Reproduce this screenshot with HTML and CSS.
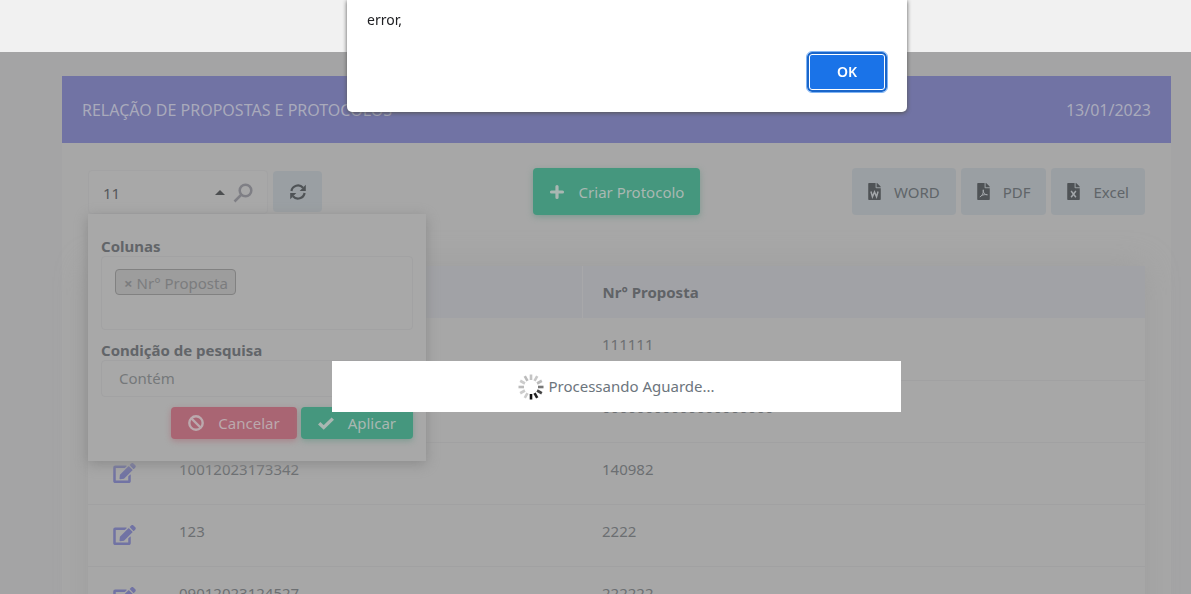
FILE: index.html
```html
<!DOCTYPE html>
<html lang="pt-BR">
<head>
<meta charset="utf-8">
<title>Relação de Propostas e Protocolos</title>
<link rel="stylesheet" href="styles.css">
</head>
<body>
<svg class="sprite" aria-hidden="true">
  <symbol id="edit" viewBox="0 0 576 512"><path d="M402.600 83.200l90.200 90.200c3.800 3.800 3.800 10 0 13.800L274.400 405.600l-92.800 10.300c-12.400 1.400-22.900-9.100-21.500-21.500l10.300-92.800L388.800 83.200c3.800-3.800 10-3.800 13.800 0zm162-22.900l-48.800-48.800c-15.200-15.200-39.900-15.200-55.200 0l-35.400 35.400c-3.800 3.800-3.800 10 0 13.800l90.200 90.200c3.800 3.800 10 3.800 13.800 0l35.400-35.400c15.200-15.300 15.200-40 0-55.200zM384 346.200V448H64V128h229.800c3.200 0 6.200-1.300 8.500-3.500l40-40c7.600-7.600 2.200-20.500-8.500-20.500H48C21.500 64 0 85.500 0 112v352c0 26.500 21.500 48 48 48h352c26.500 0 48-21.500 48-48V306.200c0-10.700-12.900-16-20.500-8.500l-40 40c-2.200 2.300-3.500 5.300-3.500 8.500z"/></symbol>
  <symbol id="file" viewBox="0 0 384 512"><path d="M224 136V0H24C10.700 0 0 10.700 0 24v464c0 13.300 10.700 24 24 24h336c13.300 0 24-10.700 24-24V160H248c-13.200 0-24-10.800-24-24zM256 0v128h128v-6c0-6-3-12-7-17L279 7c-4-4-10-7-17-7z"/></symbol>
</svg>

<div class="topbar"></div>

<main class="card">
  <header class="card-head">
    <span>RELAÇÃO DE PROPOSTAS E PROTOCOLOS</span>
    <span>13/01/2023</span>
  </header>

  <div class="card-body">
    <div class="toolbar">
      <div class="tools">
        <div class="search">
          <input class="search-input" type="text" value="11" aria-label="Pesquisar">
          <button class="bare" type="button" aria-label="Opções de pesquisa"><svg class="caret" viewBox="0 0 10 5"><path d="M0 5L5 0l5 5z"/></svg></button>
          <button class="bare" type="button" aria-label="Buscar"><svg class="lens" viewBox="0 0 20 20"><circle cx="12.500" cy="7.500" r="5.800"/><path d="M8.500 11.500L1.500 18.500"/></svg></button>
          <form class="filter">
            <label class="filter-label" for="colunas">Colunas</label>
            <div class="tags" id="colunas"><span class="tag"><button class="bare tag-x" type="button" aria-label="Remover">×</button>Nr° Proposta</span></div>
            <label class="filter-label" for="condicao">Condição de pesquisa</label>
            <select class="condition" id="condicao"><option>Contém</option></select>
            <div class="filter-actions">
              <button class="btn red" type="button"><svg class="icon" viewBox="0 0 16 16"><circle cx="8" cy="8" r="6.700" fill="none" stroke="currentColor" stroke-width="2.400"/><path d="M3.500 3.500l9 9" stroke="currentColor" stroke-width="2.400"/></svg>Cancelar</button>
              <button class="btn green" type="button"><svg class="icon" viewBox="0 0 16 16"><path d="M1.200 8.300L5.700 12.500 14.800 3.600" fill="none" stroke="currentColor" stroke-width="3.400"/></svg>Aplicar</button>
            </div>
          </form>
        </div>
        <button class="btn grey refresh" type="button" aria-label="Atualizar"><svg class="icon" viewBox="0 0 16 16"><g fill="none" stroke="currentColor" stroke-width="2.200"><path d="M1.400 7A6.700 6.700 0 0 1 13 3.700"/><path d="M14.600 9A6.700 6.700 0 0 1 3 12.300"/></g><path d="M15.800.8v6.100H9.700zM.2 15.200V9.100h6.100z"/></svg></button>
      </div>
      <button class="btn green create" type="button"><svg class="icon" viewBox="0 0 16 16"><path d="M8 2.500v11M2.500 8h11" fill="none" stroke="currentColor" stroke-width="3.200" stroke-linecap="round"/></svg>Criar Protocolo</button>
      <div class="exports">
        <button class="btn grey" type="button"><svg class="file-icon" viewBox="0 0 384 512"><use href="#file"/><path class="mark" d="M85 255l45 160 62-145 62 145 45-160"/></svg>WORD</button>
        <button class="btn grey" type="button"><svg class="file-icon" viewBox="0 0 384 512"><use href="#file"/><path class="mark thin" d="M80 420c70-25 120-120 105-215-15 90 45 150 125 150-60-15-130 0-190 25"/></svg>PDF</button>
        <button class="btn grey" type="button"><svg class="file-icon" viewBox="0 0 384 512"><use href="#file"/><path class="mark" d="M120 240l144 190M264 240L120 430"/></svg>Excel</button>
      </div>
    </div>

    <table class="grid">
      <colgroup><col class="c-edit"><col class="c-protocol"><col></colgroup>
      <thead><tr><td></td><td></td><th scope="col">Nr° Proposta</th></tr></thead>
      <tbody>
        <tr><td></td><td></td><td>111111</td></tr>
        <tr><td></td><td></td><td>00000000000000000000</td></tr>
        <tr><td><button class="bare" type="button" aria-label="Editar"><svg class="edit"><use href="#edit"/></svg></button></td><td>10012023173342</td><td>140982</td></tr>
        <tr><td><button class="bare" type="button" aria-label="Editar"><svg class="edit"><use href="#edit"/></svg></button></td><td>123</td><td>2222</td></tr>
        <tr><td><button class="bare" type="button" aria-label="Editar"><svg class="edit"><use href="#edit"/></svg></button></td><td>09012023124527</td><td>222222</td></tr>
      </tbody>
    </table>
  </div>

  <div class="processing" role="status">
    <svg class="spinner" viewBox="-13 -13 26 26">
      <g stroke-width="2.600">
        <path d="M0-7v-5.500" stroke="#c4c4c4"/>
        <path d="M0-7v-5.500" stroke="#c8c8c8" transform="rotate(30)"/>
        <path d="M0-7v-5.500" stroke="#bbb" transform="rotate(60)"/>
        <path d="M0-7v-5.500" stroke="#777" transform="rotate(90)"/>
        <path d="M0-7v-5.500" stroke="#444" transform="rotate(120)"/>
        <path d="M0-7v-5.500" stroke="#222" transform="rotate(150)"/>
        <path d="M0-7v-5.500" stroke="#111" transform="rotate(180)"/>
        <path d="M0-7v-5.500" stroke="#ccc" transform="rotate(210)"/>
        <path d="M0-7v-5.500" stroke="#ccc" transform="rotate(240)"/>
        <path d="M0-7v-5.500" stroke="#bbb" transform="rotate(270)"/>
        <path d="M0-7v-5.500" stroke="#ccc" transform="rotate(300)"/>
        <path d="M0-7v-5.500" stroke="#bbb" transform="rotate(330)"/>
      </g>
    </svg>
    <span>Processando Aguarde...</span>
  </div>
</main>

<div class="alert" role="alertdialog" aria-label="Alerta">
  <p class="alert-text">error,</p>
  <button class="alert-ok" type="button">OK</button>
</div>
</body>
</html>
```

FILE: styles.css
```css
* { box-sizing: border-box; }

html { height: 100%; }

body {
  margin: 0;
  height: 100%;
  overflow: hidden;
  background: #a4a4a5;
  color: #6c6f72;
  font: 15px/24px "Noto Sans", "Open Sans", sans-serif;
}

button, input, select { font: inherit; color: inherit; }

.sprite { display: none; }

.bare {
  display: inline-flex;
  padding: 0;
  border: 0;
  background: none;
}

.topbar {
  height: 52px;
  background: #f1f1f1;
}

.card {
  position: relative;
  margin: 24px 20px 0 62px;
  background: #a7a7a7;
}

.card-head {
  display: flex;
  justify-content: space-between;
  align-items: center;
  height: 67px;
  padding: 0 20px;
  background: #7173a4;
  color: #a9aabb;
  font-size: 16px;
}

.card-body { padding: 25px 26px 0; }

.toolbar {
  display: grid;
  grid-template-columns: 1fr auto 1fr;
  align-items: center;
}

.tools {
  display: flex;
  align-items: center;
  gap: 5px;
}

.search {
  position: relative;
  display: flex;
  align-items: center;
  gap: 8px;
  width: 180px;
  height: 44px;
  padding: 2px 14px 0;
  border: 1px solid #a3a3a4;
  border-radius: 4px;
  background: #a8a8a8;
}

.search-input {
  flex: 1;
  min-width: 0;
  padding: 0;
  border: 0;
  outline: 0;
  background: none;
  color: #55585b;
}

.caret { width: 10px; height: 5px; fill: #4d4f51; }

.lens {
  width: 20px;
  height: 20px;
  fill: none;
  stroke: #7f7f85;
  stroke-width: 2.5;
}

.btn {
  display: inline-flex;
  align-items: center;
  justify-content: center;
  height: 47px;
  padding: 0 16px;
  border: 0;
  border-radius: 4px;
  white-space: nowrap;
}

.icon {
  width: 16px;
  height: 16px;
  margin-right: 14px;
  fill: currentColor;
}

.green {
  background: #45977e;
  color: #a9b7b2;
  box-shadow: 0 2px 6px #7d9b91;
}

.red {
  background: #a96573;
  color: #bba9ad;
  box-shadow: 0 2px 6px #a88389;
}

.grey { background: #9a9fa3; color: #606569; }

.refresh { width: 49px; height: 41px; color: #4f5356; }
.refresh .icon { margin: 0; }

.exports {
  display: flex;
  justify-content: flex-end;
  gap: 5px;
}

.file-icon {
  width: 13px;
  height: 17px;
  margin-right: 13px;
  fill: #4f5356;
}

.mark {
  fill: none;
  stroke: #a3a7aa;
  stroke-width: 44;
}

.mark.thin { stroke-width: 30; }

.filter {
  position: absolute;
  z-index: 1;
  top: 43px;
  left: -1px;
  display: flex;
  flex-direction: column;
  width: 338px;
  padding: 20px 13px 22px;
  background: #a8a8a8;
  box-shadow: 0 3px 12px #8b8b8b;
}

.filter-label {
  height: 22px;
  color: #626569;
  font-weight: 700;
}

.tags {
  height: 74px;
  margin-bottom: 8px;
  padding: 12px 13px;
  border: 1px solid #a2a2a3;
  border-radius: 4px;
}

.tag {
  display: inline-flex;
  align-items: center;
  gap: 4px;
  height: 26px;
  padding: 2px 7px 0 8px;
  border: 1px solid #818181;
  border-radius: 4px;
  background: #9d9d9d;
  color: #7b7c7e;
}

.tag-x { font-weight: 700; }

.condition {
  appearance: none;
  height: 37px;
  padding: 0 17px;
  border: 1px solid #a2a2a3;
  border-radius: 4px;
  background: none;
  color: #75787a;
}

.filter-actions {
  display: flex;
  justify-content: flex-end;
  gap: 4px;
  padding-top: 10px;
}

.filter-actions .btn { height: 32px; padding: 0 17px; }

.grid {
  width: 100%;
  margin-top: 51px;
  table-layout: fixed;
  border-collapse: collapse;
  box-shadow: 0 0 30px #9e9e9e;
  background: #a7a7a7;
}

.c-edit { width: 71px; }
.c-protocol { width: 423px; }

.grid th, .grid td {
  padding: 14px 20px;
  text-align: left;
  vertical-align: top;
}

.grid thead { background: #a1a2a6; }
.grid thead th { border-left: 1px solid #a8a8aa; color: #606367; }
.grid tbody tr { height: 62px; border-bottom: 1px solid #a1a1a2; }
.grid td:first-child { padding: 5px 25px 0; vertical-align: middle; }

.edit { width: 23px; height: 20px; fill: #7173a4; }

.processing {
  position: absolute;
  z-index: 2;
  top: 285px;
  left: 270px;
  right: 270px;
  display: flex;
  align-items: flex-start;
  justify-content: center;
  gap: 4px;
  height: 51px;
  padding-top: 13px;
  background: #fff;
  color: #6c757d;
}

.spinner { width: 26px; height: 26px; }

.alert {
  position: fixed;
  z-index: 3;
  top: 0;
  left: 347px;
  display: flex;
  flex-direction: column;
  width: 560px;
  padding: 8px 20px 20px;
  border-radius: 0 0 5px 5px;
  background: #fff;
  box-shadow: 0 1px 4px #555;
}

.alert-text {
  margin: 0 0 20px;
  color: #202124;
  font-size: 14px;
}

.alert-ok {
  align-self: flex-end;
  width: 80px;
  height: 40px;
  border: 2px solid #1a66ca;
  border-radius: 5px;
  outline: 1px solid #7fb4f5;
  background: #1a73e8;
  box-shadow: inset 0 0 0 1px #fff;
  color: #fff;
  font-size: 14px;
  font-weight: 600;
}
```
